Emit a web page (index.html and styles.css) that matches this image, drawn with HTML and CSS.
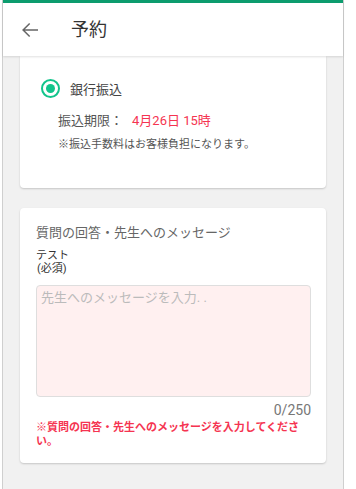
FILE: index.html
```html
<!DOCTYPE html>
<html lang="ja">
<head>
<meta charset="utf-8">
<link rel="stylesheet" href="styles.css">
</head>
<body>
<div class="frame">
  <header class="header">
    <svg class="back" width="24" height="24" viewBox="0 0 24 24"><path d="M20 11.25H6.9l5.3-5.3-1.06-1.06L4.04 12l7.1 7.1 1.06-1.05-5.3-5.3H20z" fill="#666"/></svg>
    <h1 class="title">予約</h1>
  </header>
  <main class="main">
    <section class="card card-pay">
      <div class="radio-row">
        <span class="radio"><span class="dot"></span></span>
        <span class="radio-label">銀行振込</span>
      </div>
      <div class="deadline">振込期限：<span class="deadline-val">4月26日 15時</span></div>
      <div class="note">※振込手数料はお客様負担になります。</div>
    </section>
    <section class="card card-msg">
      <div class="msg-title">質問の回答・先生へのメッセージ</div>
      <div class="field-label">テスト<br><span class="req">(必須)</span></div>
      <div class="textarea">先生へのメッセージを入力. .</div>
      <div class="counter">0/250</div>
      <div class="error">※質問の回答・先生へのメッセージを入力してください。</div>
    </section>
  </main>
</div>
</body>
</html>
```
FILE: styles.css
```css
* { box-sizing: border-box; }
html, body { margin: 0; padding: 0; background: #fff; }
body {
  font-family: Roboto, "Noto Sans CJK JP", sans-serif;
  width: 356px;
  height: 489px;
  overflow: hidden;
}
.frame {
  margin-left: 2px;
  width: 342px;
  height: 489px;
  background: #f1f1f1;
  border-left: 1px solid #cfcfcf;
  border-right: 1px solid #cfcfcf;
  display: flex;
  flex-direction: column;
}
.header {
  height: 56px;
  background: #fff;
  border-top: 3px solid #0c9c6e;
  display: flex;
  align-items: center;
  padding-left: 15px;
  box-shadow: 0 1px 2px rgba(0,0,0,0.12);
  position: relative;
  z-index: 1;
  flex-shrink: 0;
}
.back { display: block; margin-top: 1px; }
.title {
  margin: 0 0 0 29px;
  font-size: 18px;
  font-weight: 400;
  color: #333;
  line-height: 1;
}
.main {
  padding: 0 17px 0 17px;
}
.card {
  background: #fff;
  border-radius: 4px;
  box-shadow: 0 1px 2px rgba(0,0,0,0.18);
}
.card-pay {
  border-radius: 0 0 4px 4px;
  height: 132px;
  padding: 22px 0 0 21px;
}
.radio-row {
  display: flex;
  align-items: center;
  height: 20px;
}
.radio {
  width: 19px;
  height: 19px;
  border: 2px solid #12c48b;
  border-radius: 50%;
  display: flex;
  align-items: center;
  justify-content: center;
}
.dot {
  width: 9px;
  height: 9px;
  border-radius: 50%;
  background: #12c48b;
}
.radio-label {
  margin-left: 10px;
  font-size: 13px;
  color: #444;
}
.deadline {
  margin: 14px 0 0 17px;
  font-size: 13px;
  color: #555;
  line-height: 18px;
}
.deadline-val {
  color: #f53451;
  margin-left: 9px;
}
.note {
  margin: 7px 0 0 17px;
  font-size: 11px;
  color: #555;
  line-height: 16px;
}
.card-msg {
  margin-top: 20px;
  height: 255px;
  padding: 16px 15px 0 16px;
}
.msg-title {
  font-size: 13px;
  color: #666;
  line-height: 18px;
}
.field-label {
  margin-top: 7px;
  font-size: 11px;
  color: #333;
  line-height: 13px;
}
.req { margin-left: 1px; }
.textarea {
  margin-top: 10px;
  height: 112px;
  background: #fff0f0;
  border: 1px solid #dedede;
  border-radius: 4px;
  padding: 3px 4px;
  font-size: 13px;
  color: #bbb;
  line-height: 18px;
}
.counter {
  text-align: right;
  font-size: 14px;
  color: #777;
  margin-top: 5px;
  line-height: 17px;
}
.error {
  margin-top: 2px;
  font-size: 11px;
  font-weight: 700;
  color: #f53451;
  line-height: 14px;
}
```
